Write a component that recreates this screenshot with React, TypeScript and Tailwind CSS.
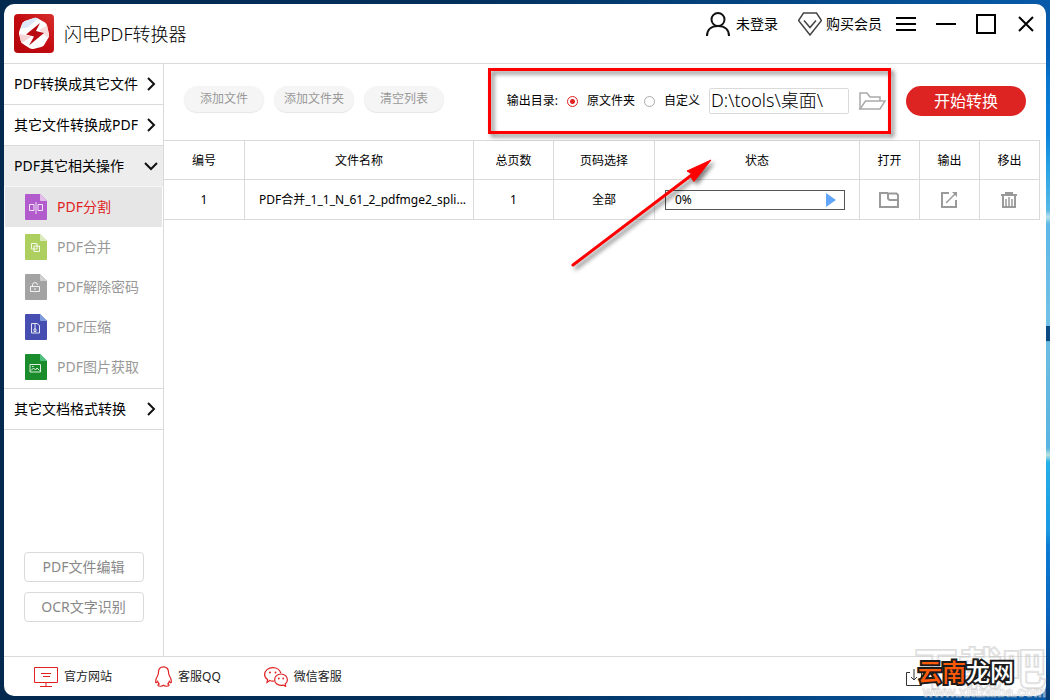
import React, { useState } from 'react';
import { clsx } from 'clsx';

type FileKind = 'split' | 'merge' | 'unlock' | 'compress' | 'image';

interface Tool {
  kind: FileKind;
  label: string;
  fill: string;
  fold: string;
}

const tools: Tool[] = [
  { kind: 'split', label: 'PDF分割', fill: '#b15bcd', fold: '#e3bdec' },
  { kind: 'merge', label: 'PDF合并', fill: '#adcf60', fold: '#dcebbd' },
  { kind: 'unlock', label: 'PDF解除密码', fill: '#a3a3a3', fold: '#cfcfcf' },
  { kind: 'compress', label: 'PDF压缩', fill: '#474eb2', fold: '#7f9ddb' },
  { kind: 'image', label: 'PDF图片获取', fill: '#1b8c2b', fold: '#4fc07d' },
];

/** Small glyph drawn in the middle of a file icon */
function FileGlyph({ kind }: { kind: FileKind }) {
  switch (kind) {
    case 'split':
      return <path d="M4.500 10.500h4.500v6H4.500zM13 10.500h4.500v6H13zM11 8v12" />;
    case 'merge':
      return <path d="M6.500 9.500h5.500v5.500H6.500zM9 12h5.500v5.500H9z" />;
    case 'unlock':
      return <path d="M5.500 12.500h9v5h-9zM7.500 12.500v-1.500a2.500 2.500 0 0 1 5 0M10 14v2" />;
    case 'compress':
      return <path d="M6.500 9.500H12l2.500 2v7.500h-8zM10 10v5M9 15h2v2.500H9z" />;
    case 'image':
      return <path d="M5 10.500h10.500v7.500H5zM6 16.500l2.500-2.500 2 2 1.500-2 2.500 2.500M7 12.500h1.500" />;
  }
}

function FileIcon({ kind, fill, fold }: Omit<Tool, 'label'>) {
  return (
    <svg width="22" height="26" viewBox="0 0 22 26" aria-hidden="true">
      <path d="M1 0h14l7 7v18a1 1 0 0 1-1 1H1a1 1 0 0 1-1-1V1a1 1 0 0 1 1-1z" fill={fill} />
      <path d="M15 0l7 7h-6a1 1 0 0 1-1-1z" fill={fold} />
      <g fill="none" stroke="#fff" strokeWidth="1" opacity=".85">
        <FileGlyph kind={kind} />
      </g>
    </svg>
  );
}

function Logo() {
  return (
    <svg width="40" height="40" viewBox="0 0 40 40" aria-hidden="true">
      <defs>
        <linearGradient id="logo-bg" x1="0" y1="1" x2="1" y2="0">
          <stop offset="0" stopColor="#b3060c" />
          <stop offset=".5" stopColor="#c20a10" />
          <stop offset="1" stopColor="#d8302f" />
        </linearGradient>
      </defs>
      <rect width="40" height="39" rx="4" fill="url(#logo-bg)" />
      <path d="M20 4q2-.5 4 .5l7 4q1.500 1 2 3l2 9q.3 2-.8 3.500l-4 7q-1 1.500-3 2l-8 2q-2 .3-3.500-.7l-7-4.500Q7 29 6.800 27L5 20q-.3-2 .5-3.500L8 10q1-2 3-3z" fill="#fff" />
      <path d="M11 7l9-3q2-.5 4 .5l-10 9-7 1L8 10q1-2 3-3z" fill="#dce7f7" />
      <path d="M5.500 20l12 2.500L8 29q-1-1-1.200-2z" fill="#f5d3d4" />
      <path d="M33 11.500l2 9q.3 2-.8 3.500L25 16z" fill="#f8dcdc" />
      <path d="M26 9L12 20.500l8 2L15 31.500 30 19l-8-2z" fill="#b90c12" />
    </svg>
  );
}

function Chevron({ open = false }: { open?: boolean }) {
  return (
    <svg width="14" height="14" viewBox="0 0 14 14" fill="none" stroke="#111" strokeWidth="2" aria-hidden="true">
      {open ? <path d="M1 4l6 6 6-6" /> : <path d="M4 1l6 6-6 6" />}
    </svg>
  );
}

function CategoryRow({ label, open = false }: { label: string; open?: boolean }) {
  return (
    <button
      aria-expanded={open}
      className={clsx(
        'flex h-[41px] w-full items-center justify-between whitespace-nowrap border-b pr-[5px] pl-2.5 text-sm text-black',
        open ? 'border-[#f6f6f6] bg-[#ededed]' : 'border-[#dadada] bg-white',
      )}
    >
      {label}
      <Chevron open={open} />
    </button>
  );
}

function Sidebar() {
  const [active, setActive] = useState<FileKind>('split');

  return (
    <nav className="flex w-40 shrink-0 flex-col border-r border-[#dadada]">
      <CategoryRow label="PDF转换成其它文件" />
      <CategoryRow label="其它文件转换成PDF" />
      <CategoryRow label="PDF其它相关操作" open />

      {/* Tools of the open category */}
      <ul className="border-b border-[#dadada] px-px pb-px">
        {tools.map((tool) => (
          <li key={tool.kind}>
            <button
              onClick={() => setActive(tool.kind)}
              className={clsx(
                'flex h-10 w-full items-center gap-2.5 whitespace-nowrap pl-5 text-sm',
                tool.kind === active ? 'bg-[#e6e6e6] text-[#e02222]' : 'text-[#999]',
              )}
            >
              <FileIcon kind={tool.kind} fill={tool.fill} fold={tool.fold} />
              {tool.label}
            </button>
          </li>
        ))}
      </ul>
      <CategoryRow label="其它文档格式转换" />

      <div className="mt-auto flex flex-col items-center gap-2.5 pb-[34px]">
        <button className="h-[30px] w-[120px] rounded-sm border border-[#dadada] text-sm text-[#888]">
          PDF文件编辑
        </button>
        <button className="h-[30px] w-[120px] rounded-sm border border-[#dadada] text-sm text-[#888]">
          OCR文字识别
        </button>
      </div>
    </nav>
  );
}

function TitleBar() {
  return (
    <header className="flex h-[60px] shrink-0 justify-between border-b border-[#dadada] pr-2.5 pl-2.5">
      <div className="flex items-center gap-2.5">
        <Logo />
        <h1 className="text-lg font-light text-black">闪电PDF转换器</h1>
      </div>

      <div className="flex h-10 items-center">
        <button className="flex items-center gap-1.5 text-sm text-black">
          <svg width="24" height="24" viewBox="0 0 24 24" fill="none" stroke="#111" strokeWidth="2" aria-hidden="true">
            <circle cx="12" cy="7.500" r="6.500" />
            <path d="M1 24c0-6 4-10 11-10s11 4 11 10" />
          </svg>
          未登录
        </button>
        <button className="ml-5 flex items-center gap-1 text-sm text-black">
          <svg width="24" height="24" viewBox="0 0 24 24" fill="none" stroke="#444" strokeWidth="1.500" aria-hidden="true">
            <path d="M5.500 1h13L23.500 8.500 12 23 .5 8.500z" />
            <path d="M6 8.500l6 7 6-7" />
          </svg>
          购买会员
        </button>
        <div className="ml-3.5 flex gap-5">
          <button aria-label="菜单">
            <svg width="20" height="20" viewBox="0 0 20 20" stroke="#000" strokeWidth="2">
              <path d="M0 4h20M0 10h20M0 16h20" />
            </svg>
          </button>
          <button aria-label="最小化">
            <svg width="20" height="20" viewBox="0 0 20 20" stroke="#000" strokeWidth="2">
              <path d="M0 10h20" />
            </svg>
          </button>
          <button aria-label="最大化">
            <svg width="20" height="20" viewBox="0 0 20 20" fill="none" stroke="#000" strokeWidth="2">
              <path d="M1 1h18v18H1z" />
            </svg>
          </button>
          <button aria-label="关闭">
            <svg width="20" height="20" viewBox="0 0 20 20" stroke="#000" strokeWidth="2">
              <path d="M3 3l14 14M17 3L3 17" />
            </svg>
          </button>
        </div>
      </div>
    </header>
  );
}

const radioClass =
  'size-[11px] appearance-none rounded-full border border-[#aaa] bg-white checked:border-[#e02222] checked:bg-[radial-gradient(circle,#e02222_2px,transparent_3px)]';

function Toolbar() {
  const [target, setTarget] = useState('source');

  return (
    <div className="flex h-[76px] shrink-0 items-center whitespace-nowrap pr-5 pb-0.5 pl-5 text-xs">
      <div className="flex gap-2.5 pb-1">
        {['添加文件', '添加文件夹', '清空列表'].map((label) => (
          <button
            key={label}
            className="h-[26px] w-20 rounded-full bg-[#f5f5f5] text-[#999] shadow-[0_1px_1px_rgba(0,0,0,0.1)]"
          >
            {label}
          </button>
        ))}
      </div>

      {/* Output directory */}
      <div className="ml-auto flex items-center gap-[9px] text-black">
        <span>输出目录:</span>
        <label className="flex items-center gap-[9px]">
          <input
            type="radio"
            name="target"
            className={radioClass}
            checked={target === 'source'}
            onChange={() => setTarget('source')}
          />
          原文件夹
        </label>
        <label className="flex items-center gap-[9px]">
          <input
            type="radio"
            name="target"
            className={radioClass}
            checked={target === 'custom'}
            onChange={() => setTarget('custom')}
          />
          自定义
        </label>
        <input
          aria-label="输出目录"
          defaultValue="D:\tools\桌面\"
          className="h-[26px] w-[140px] rounded-xs border border-[#dadada] px-px pb-0.5 text-lg font-light"
        />
        <button aria-label="浏览">
          <svg width="28" height="18" viewBox="0 0 28 18" fill="none" stroke="#aaa" strokeWidth="1.500">
            <path d="M2 17V1h7l3 4h10v4" />
            <path d="M2 17L7.500 9H27l-5 8z" />
          </svg>
        </button>
      </div>

      <button className="ml-5 h-[30px] w-[120px] rounded-full bg-[#de2422] text-base text-white">开始转换</button>
    </div>
  );
}

const headings = ['编号', '文件名称', '总页数', '页码选择', '状态', '打开', '输出', '移出'];

function FileTable() {
  return (
    <div className="pr-1.5">
      <table className="w-full table-fixed border-separate border-spacing-0 border-t border-[#dadada] text-center text-xs text-black">
        <colgroup>
          <col className="w-[81px]" />
          <col />
          <col className="w-20" />
          <col className="w-[101px]" />
          <col className="w-[205px]" />
          <col className="w-[60px]" />
          <col className="w-[60px]" />
          <col className="w-[60px]" />
        </colgroup>
        <thead>
          <tr>
            {headings.map((heading) => (
              <th key={heading} className="h-[39px] border-r border-b border-[#dadada] px-0 pt-0.5 pb-0 font-normal">
                {heading}
              </th>
            ))}
          </tr>
        </thead>
        <tbody className="[&_td]:h-10 [&_td]:border-r [&_td]:border-b [&_td]:border-[#dadada]">
          <tr>
            <td>1</td>
            <td className="pr-0.5 pl-3.5 text-left">PDF合并_1_1_N_61_2_pdfmge2_spli...</td>
            <td>1</td>
            <td>全部</td>
            <td className="pr-3.5 pl-2.5">
              <div className="flex h-5 items-center justify-between border border-[#555] pr-2 pl-[9px]">
                <span>0%</span>
                <button aria-label="开始">
                  <svg width="10" height="14" viewBox="0 0 10 14" fill="#61a6fb">
                    <path d="M0 0l10 7-10 7z" />
                  </svg>
                </button>
              </div>
            </td>
            <td className="pr-px">
              <button aria-label="打开" className="align-middle">
                <svg width="20" height="16" viewBox="0 0 20 16" fill="none" stroke="#9a9a9a" strokeWidth="2">
                  <path d="M9 1H1v14h18V3L17.500 1.500H9" />
                  <path d="M9 1v5.500l1.500 1.500H19" />
                </svg>
              </button>
            </td>
            <td className="pr-px">
              <button aria-label="输出" className="align-middle">
                <svg width="16" height="16" viewBox="0 0 16 16" fill="none" stroke="#9a9a9a" strokeWidth="2">
                  <path d="M8 1H1v14h14V8" />
                  <path d="M5 11l9-9" strokeWidth="1.500" />
                  <path d="M11 0h5v5z" fill="#9a9a9a" stroke="none" />
                </svg>
              </button>
            </td>
            <td className="pr-px">
              <button aria-label="移出" className="align-middle">
                <svg width="16" height="16" viewBox="0 0 16 16" fill="none" stroke="#9a9a9a" strokeWidth="1.500">
                  <path d="M0 3h16M4 1h8" strokeWidth="2" />
                  <path d="M2 4v11h12V4" strokeWidth="2" />
                  <path d="M5 7v7M8 5v9M11 7v7" />
                </svg>
              </button>
            </td>
          </tr>
        </tbody>
      </table>
    </div>
  );
}

function Footer() {
  return (
    <footer className="flex h-10 shrink-0 items-center gap-[43px] border-t border-[#dadada] pl-[30px] text-xs text-[#222]">
      <a href="#site" className="flex items-center gap-1.5">
        <svg width="24" height="20" viewBox="0 0 24 20" fill="none" stroke="#e02222" aria-hidden="true">
          <path d="M.5.5h23v15H.5zM7 6.500h10M9 9.500h7M12 16v3M6 19.500h12" />
        </svg>
        官方网站
      </a>
      <a href="#qq" className="flex items-center gap-1.5">
        <svg width="17" height="21" viewBox="0 0 17 21" fill="none" stroke="#e02222" strokeWidth="1.200" aria-hidden="true">
          <path d="M8.500.8C5.500.8 3.500 3 3.500 6c0 1.500-.2 2.500-1 4C1 12.500.3 14.500.8 16.500c.5.600 1.200-.3 1.900-1.200.3 1 .8 1.900 1.500 2.600-1 .4-1.500 1.200-1 1.800.7.900 4 .7 5.300-.4 1.300 1.100 4.600 1.300 5.300.4.500-.6 0-1.400-1-1.800.7-.7 1.200-1.600 1.500-2.600.7.900 1.400 1.800 1.900 1.200.5-2-.2-4-1.700-6.500-.8-1.500-1-2.500-1-4 0-3-2-5.200-5-5.200z" />
        </svg>
        客服QQ
      </a>
      <a href="#wechat" className="flex items-center gap-1.5">
        <svg width="24" height="20" viewBox="0 0 24 20" fill="none" stroke="#e02222" strokeWidth="1.200" aria-hidden="true">
          <path d="M10 14c-1.500.2-3 0-4.200-.5L3 15.500l.6-3C1.700 11.300.6 9.500.6 7.500c0-3.800 3.700-6.900 8.200-6.900 4 0 7.300 2.400 8 5.600" />
          <path d="M17 7c3.600 0 6.400 2.500 6.400 5.700 0 1.700-.8 3.200-2.200 4.300l.4 2.400-2.300-1.300c-.7.200-1.500.3-2.300.3-3.600 0-6.400-2.500-6.400-5.700S13.400 7 17 7z" />
          <g fill="#e02222" stroke="none">
            <circle cx="6" cy="5.500" r="1" />
            <circle cx="11.500" cy="5.500" r="1" />
            <circle cx="14.800" cy="11.500" r=".9" />
            <circle cx="19.200" cy="11.500" r=".9" />
          </g>
        </svg>
        微信客服
      </a>
      <button aria-label="下载" className="mr-[124px] ml-auto">
        <svg width="16" height="18" viewBox="0 0 16 18" fill="none" stroke="#333">
          <path d="M4 4.500H.5v13h15v-13H12M8 1v11M5 9l3 3 3-3" />
        </svg>
      </button>
    </footer>
  );
}

/** Red frame and arrow drawn over the window */
function Annotation() {
  return (
    <svg
      className="pointer-events-none absolute top-0 right-0 [filter:drop-shadow(3px_3px_2px_rgba(0,0,0,0.5))]"
      width="570"
      height="280"
      viewBox="480 0 570 280"
      fill="none"
      stroke="#fe0000"
      strokeWidth="3"
      aria-hidden="true"
    >
      <path d="M489.500 69.500h400v63h-400z" />
      <path d="M573 265L693 174" strokeLinecap="round" />
      <path d="M711 160l-24 11 5 3-2 2 4 5.500z" fill="#fe0000" strokeWidth="1" />
    </svg>
  );
}

function Watermark() {
  return (
    <div className="pointer-events-none absolute right-0 bottom-0 h-[62px] w-[136px] whitespace-nowrap">
      <span className="absolute top-1 left-0 text-[44px] leading-[52px] font-bold text-white/30 [paint-order:stroke_fill] [-webkit-text-stroke:2px_#c8c8c8a0]">
        下载吧
      </span>
      <span className="absolute right-1 bottom-0 font-['Liberation_Sans'] text-sm leading-4 font-bold text-white/40 [-webkit-text-stroke:1px_#c4c4c480]">
        www.xiazaiba.com
      </span>
      <span className="absolute top-4 left-1 text-2xl leading-9 font-medium text-white [paint-order:stroke_fill] [-webkit-text-stroke:4px_#1b1b1b]">
        <span className="text-[#ff5a0a]">云南</span>龙网
      </span>
    </div>
  );
}

export default function App() {
  return (
    <div className="relative flex min-h-screen bg-[linear-gradient(90deg,#03294f,#02305c_45%,#075aa8)] font-['Noto_Sans','Noto_Sans_CJK_SC',sans-serif]">
      {/* Application window */}
      <div className="my-1 ml-1 flex min-w-0 flex-1 flex-col overflow-hidden rounded-[10px] bg-white">
        <TitleBar />
        <div className="flex flex-1">
          <Sidebar />
          <main className="flex min-w-0 flex-1 flex-col">
            <Toolbar />
            <FileTable />
          </main>
        </div>
        <Footer />
      </div>

      {/* Strip of desktop wallpaper right of the window */}
      <div className="w-1 bg-[linear-gradient(#075aa8,#0560b8_8%,#0878d2_12%,#0a82dc_19%,#28a4e4_24%,#58b8e6_30%,#b8e2ec_31%,#5cb8e6_32%,#74c0e6_46.500%,#0a4a80_46.600%,#0a4a80_48.700%,#6cbce2_48.800%,#58b4e0_64%,#b8e2e0_65%,#28b0e8_66%,#1898e0_76%,#0a7cd4_78%,#0a64bc_88%,#033a70)]" />

      <Annotation />
      <Watermark />
    </div>
  );
}
